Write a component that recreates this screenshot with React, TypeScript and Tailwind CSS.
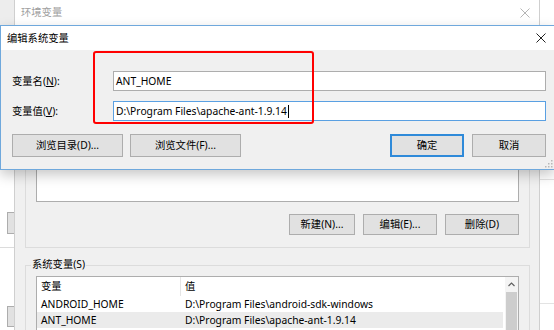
import React from 'react';

const CloseIcon: React.FC<{ className?: string }> = ({ className }) => (
  <svg width="10" height="10" viewBox="0 0 10 10" className={className}>
    <path d="M0.5 0.5 L9.5 9.5 M9.5 0.5 L0.5 9.5" stroke="currentColor" strokeWidth="1" fill="none" />
  </svg>
);

const WinButton: React.FC<{ label: string; className?: string; primary?: boolean }> = ({
  label,
  className = '',
  primary,
}) => (
  <div
    className={`shrink-0 flex items-center justify-center bg-[#e1e1e1] ${
      primary ? 'border-2 border-[#2f8ad9]' : 'border border-[#adadad]'
    } ${className}`}
  >
    {label}
  </div>
);

const App: React.FC = () => {
  return (
    <div className="relative w-[554px] h-[330px] overflow-hidden bg-white text-[10.3px] leading-none text-black font-['Noto_Sans','Noto_Sans_CJK_SC',sans-serif]">
      {/* windows behind */}
      <div className="flex h-full">
        {/* left strip of another window */}
        <div className="w-[14px] shrink-0 flex flex-col">
          <div className="h-[25px] shrink-0 bg-[#ededed]" />
          <div className="flex-1 bg-white flex flex-col">
            <div className="h-[187px] shrink-0" />
            <div className="ml-[7px] h-[22px] shrink-0 bg-[#e1e1e1] border-y border-l border-[#adadad]" />
            <div className="mt-[13px] border-t border-[#dcdcdc]" />
            <div className="mt-[58px] ml-[7px] h-[21px] shrink-0 bg-[#e1e1e1] border-y border-l border-[#adadad]" />
          </div>
        </div>

        {/* 环境变量 window */}
        <div className="w-[526px] shrink-0 flex flex-col border-x border-[#cfcfcf]">
          <div className="h-[25px] shrink-0 bg-white flex items-center justify-between pl-[6px] pr-[9px] text-[#a0a0a0]">
            <span>环境变量</span>
            <CloseIcon className="text-[#b5b5b5]" />
          </div>
          <div className="flex-1 overflow-hidden bg-[#f0f0f0] pl-[10px] pr-[9px]">
            {/* user variables group (top part sits under the dialog) */}
            <div className="mt-[14px] border border-[#dcdcdc] px-[10px] pt-[15px] pb-[12px]">
              <div className="h-[147px] bg-white border border-[#adadad]" />
              <div className="mt-[12px] flex justify-end gap-[8px]">
                <WinButton label="新建(N)..." className="w-[66px] h-[21px]" />
                <WinButton label="编辑(E)..." className="w-[74px] h-[21px]" />
                <WinButton label="删除(D)" className="w-[74px] h-[21px]" />
              </div>
            </div>

            {/* system variables group */}
            <div className="relative mt-[17px] border border-[#dcdcdc] px-[10px] pt-[10px] h-[80px]">
              <span className="absolute left-[5px] -top-[7px] bg-[#f0f0f0] px-[1px]">系统变量(S)</span>
              <div className="flex bg-white border border-[#adadad] h-[70px]">
                <div className="flex-1 flex flex-col">
                  <div className="flex h-[19px] shrink-0 items-center">
                    <div className="w-[144px] h-full flex items-center pl-[4px] border-r border-[#e5e5e5]">变量</div>
                    <div className="pl-[4px]">值</div>
                  </div>
                  <div className="flex h-[16px] shrink-0 items-center">
                    <div className="w-[144px] pl-[4px]">ANDROID_HOME</div>
                    <div className="pl-[4px]">D:\Program Files\android-sdk-windows</div>
                  </div>
                  <div className="flex h-[16px] shrink-0 items-center bg-[#ebebeb]">
                    <div className="w-[144px] pl-[4px]">ANT_HOME</div>
                    <div className="pl-[4px]">D:\Program Files\apache-ant-1.9.14</div>
                  </div>
                </div>
                <div className="w-[13px] ml-[2px] bg-[#f4f4f4] flex flex-col">
                  <div className="h-[15px] shrink-0 flex items-center justify-center">
                    <svg width="7" height="5" viewBox="0 0 7 5">
                      <path d="M0.5 4 L3.5 1 L6.5 4" stroke="#606060" strokeWidth="1.2" fill="none" />
                    </svg>
                  </div>
                  <div className="flex-1 mx-[1px] bg-[#cdcdcd]" />
                </div>
              </div>
            </div>
          </div>
        </div>

        {/* right strip */}
        <div className="flex-1 bg-white flex flex-col">
          <div className="h-[179px] shrink-0" />
          <div className="border-t border-[#e3e3e3]" />
          <div className="mt-[123px] border-t border-[#e3e3e3]" />
        </div>
      </div>

      {/* 编辑系统变量 dialog */}
      <div className="absolute left-0 top-[25px] w-[554px] h-[145px] flex flex-col border-y border-l border-[#6fa8dc] bg-[#f0f0f0] shadow-[0_5px_12px_rgba(0,0,0,0.22)]">
        <div className="h-[24px] shrink-0 bg-white flex items-center justify-between pl-[6px] pr-[8px]">
          <span>编辑系统变量</span>
          <CloseIcon className="text-[#222]" />
        </div>
        <div className="relative flex-1 pl-[11px] pr-[8px] pt-[21px]">
          <div className="flex items-center">
            <div className="w-[101px]">
              变量名(<span className="underline">N</span>):
            </div>
            <div className="flex-1 h-[20px] bg-white border border-[#adadad] flex items-center pl-[2px]">ANT_HOME</div>
          </div>
          <div className="mt-[10px] flex items-center">
            <div className="w-[101px]">
              变量值(<span className="underline">V</span>):
            </div>
            <div className="flex-1 h-[20px] bg-white border border-[#5aa0e2] flex items-center pl-[2px]">
              <span>D:\Program Files\apache-ant-1.9.14</span>
              <span className="ml-[1px] w-[1px] h-[13px] bg-black" />
            </div>
          </div>
          <div className="mt-[13px] flex h-[23px]">
            <WinButton label="浏览目录(D)..." className="w-[111px]" />
            <WinButton label="浏览文件(F)..." className="ml-[7px] w-[111px]" />
            <div className="flex-1" />
            <WinButton label="确定" className="w-[74px]" primary />
            <WinButton label="取消" className="ml-[8px] w-[74px]" />
          </div>
          <svg width="8" height="8" viewBox="0 0 8 8" className="absolute right-[1px] bottom-[1px]">
            <rect x="6" y="0" width="1.5" height="1.5" fill="#b8b8b8" />
            <rect x="3" y="3" width="1.5" height="1.5" fill="#b8b8b8" />
            <rect x="6" y="3" width="1.5" height="1.5" fill="#b8b8b8" />
            <rect x="0" y="6" width="1.5" height="1.5" fill="#b8b8b8" />
            <rect x="3" y="6" width="1.5" height="1.5" fill="#b8b8b8" />
            <rect x="6" y="6" width="1.5" height="1.5" fill="#b8b8b8" />
          </svg>
        </div>
      </div>

      {/* red annotation box */}
      <div className="absolute left-[93px] top-[51px] w-[221px] h-[73px] border-2 border-[#ff0000] rounded-[3px]" />
    </div>
  );
};

export default App;
